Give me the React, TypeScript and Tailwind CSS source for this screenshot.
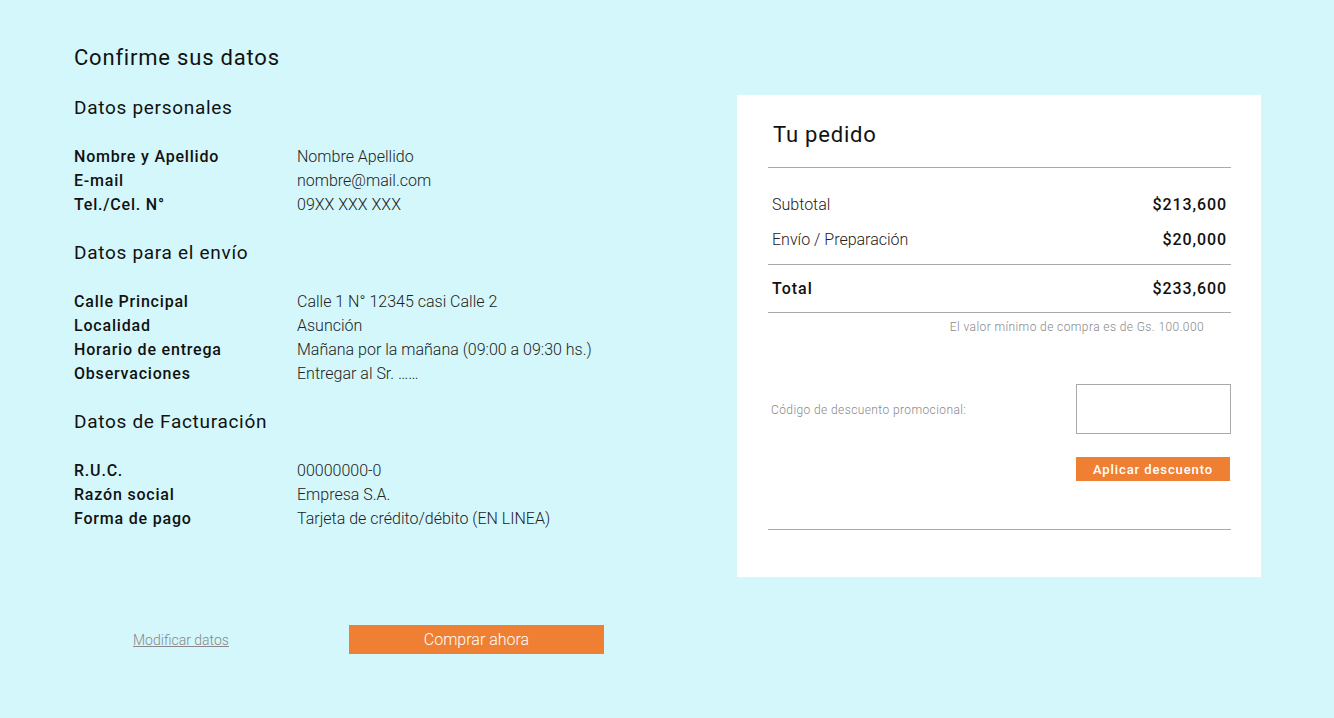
import React from "react";

const font = { fontFamily: "Roboto, 'Liberation Sans', sans-serif" };

function Row({ label, value }: { label: string; value: string }) {
  return (
    <div className="flex h-6 items-center text-[16px] leading-6">
      <div className="w-[223px] font-medium tracking-[0.8px] text-[#111]">{label}</div>
      <div className="font-light text-[#222]">{value}</div>
    </div>
  );
}

function Section({ title, rows }: { title: string; rows: [string, string][] }) {
  return (
    <div className="flex flex-col">
      <h2 className="text-[19px] leading-6 font-normal text-[#111] tracking-[0.7px]">{title}</h2>
      <div className="mt-[25px] flex flex-col">
        {rows.map(([l, v]) => (
          <Row key={l} label={l} value={v} />
        ))}
      </div>
    </div>
  );
}

export default function App() {
  return (
    <div className="min-h-[718px] w-full bg-[#d4f7fb] pt-[44px]" style={font}>
      <div className="flex items-start">
        <div className="w-[737px] shrink-0 pl-[74px]">
          <h1 className="text-[22px] leading-7 font-normal tracking-[0.8px] text-[#111]">Confirme sus datos</h1>
          <div className="mt-[24px] flex flex-col gap-[24px]">
            <Section
              title="Datos personales"
              rows={[
                ["Nombre y Apellido", "Nombre Apellido"],
                ["E-mail", "nombre@mail.com"],
                ["Tel./Cel. N°", "09XX XXX XXX"],
              ]}
            />
            <Section
              title="Datos para el envío"
              rows={[
                ["Calle Principal", "Calle 1 N° 12345 casi Calle 2"],
                ["Localidad", "Asunción"],
                ["Horario de entrega", "Mañana por la mañana (09:00 a 09:30 hs.)"],
                ["Observaciones", "Entregar al Sr. ……"],
              ]}
            />
            <Section
              title="Datos de Facturación"
              rows={[
                ["R.U.C.", "00000000-0"],
                ["Razón social", "Empresa S.A."],
                ["Forma de pago", "Tarjeta de crédito/débito (EN LINEA)"],
              ]}
            />
          </div>
        </div>

        <div className="mt-[51px] flex h-[482px] w-[524px] shrink-0 flex-col bg-white pl-[31px] pr-[30px] pt-[20px]">
          <h2 className="mt-[6px] pl-[5px] text-[22px] leading-7 font-normal tracking-[0.8px] text-[#111]">Tu pedido</h2>
          <div className="mt-[18px] h-px bg-[#aaa]" />
          <div className="mt-[24px] flex flex-col gap-[11px] px-[4px]">
            <div className="flex h-6 items-center justify-between pt-[2px] text-[16px]">
              <span className="font-light text-[#222]">Subtotal</span>
              <span className="font-medium tracking-[0.9px] text-[#111]">$213,600</span>
            </div>
            <div className="flex h-6 items-center justify-between pt-[2px] text-[16px]">
              <span className="font-light text-[#222]">Envío / Preparación</span>
              <span className="font-medium tracking-[0.9px] text-[#111]">$20,000</span>
            </div>
          </div>
          <div className="mt-[13px] h-px bg-[#aaa]" />
          <div className="mt-[11px] flex h-6 items-center justify-between px-[4px] pt-[2px] text-[16px]">
            <span className="font-medium tracking-[1px] text-[#111]">Total</span>
            <span className="font-medium tracking-[0.9px] text-[#111]">$233,600</span>
          </div>
          <div className="mt-[12px] h-px bg-[#aaa]" />
          <div className="mt-[6px] h-4 pr-[27px] text-right text-[12px] leading-4 font-light tracking-[0.4px] text-[#888]">
            El valor mínimo de compra es de Gs. 100.000
          </div>
          <div className="mt-[49px] flex items-center justify-between">
            <span className="pl-[3px] pt-[2px] text-[12px] font-light tracking-[0.4px] text-[#888]">Código de descuento promocional:</span>
            <input className="h-[50px] w-[155px] border border-[#aaa] bg-white outline-none" />
          </div>
          <div className="mt-[23px] flex justify-end pr-px">
            <button className="h-6 w-[154px] bg-[#ee7f33] pt-px text-[13px] font-medium tracking-[0.9px] text-white">Aplicar descuento</button>
          </div>
          <div className="mt-[48px] h-px bg-[#aaa]" />
        </div>
      </div>

      <div className="mt-[48px] flex items-center pl-[133px]">
        <div className="w-[216px]">
          <a href="#" className="text-[14px] font-light text-[#888] underline">Modificar datos</a>
        </div>
        <button className="h-[29px] w-[255px] bg-[#ee7f33] text-[16px] font-light text-white">Comprar ahora</button>
      </div>
    </div>
  );
}
